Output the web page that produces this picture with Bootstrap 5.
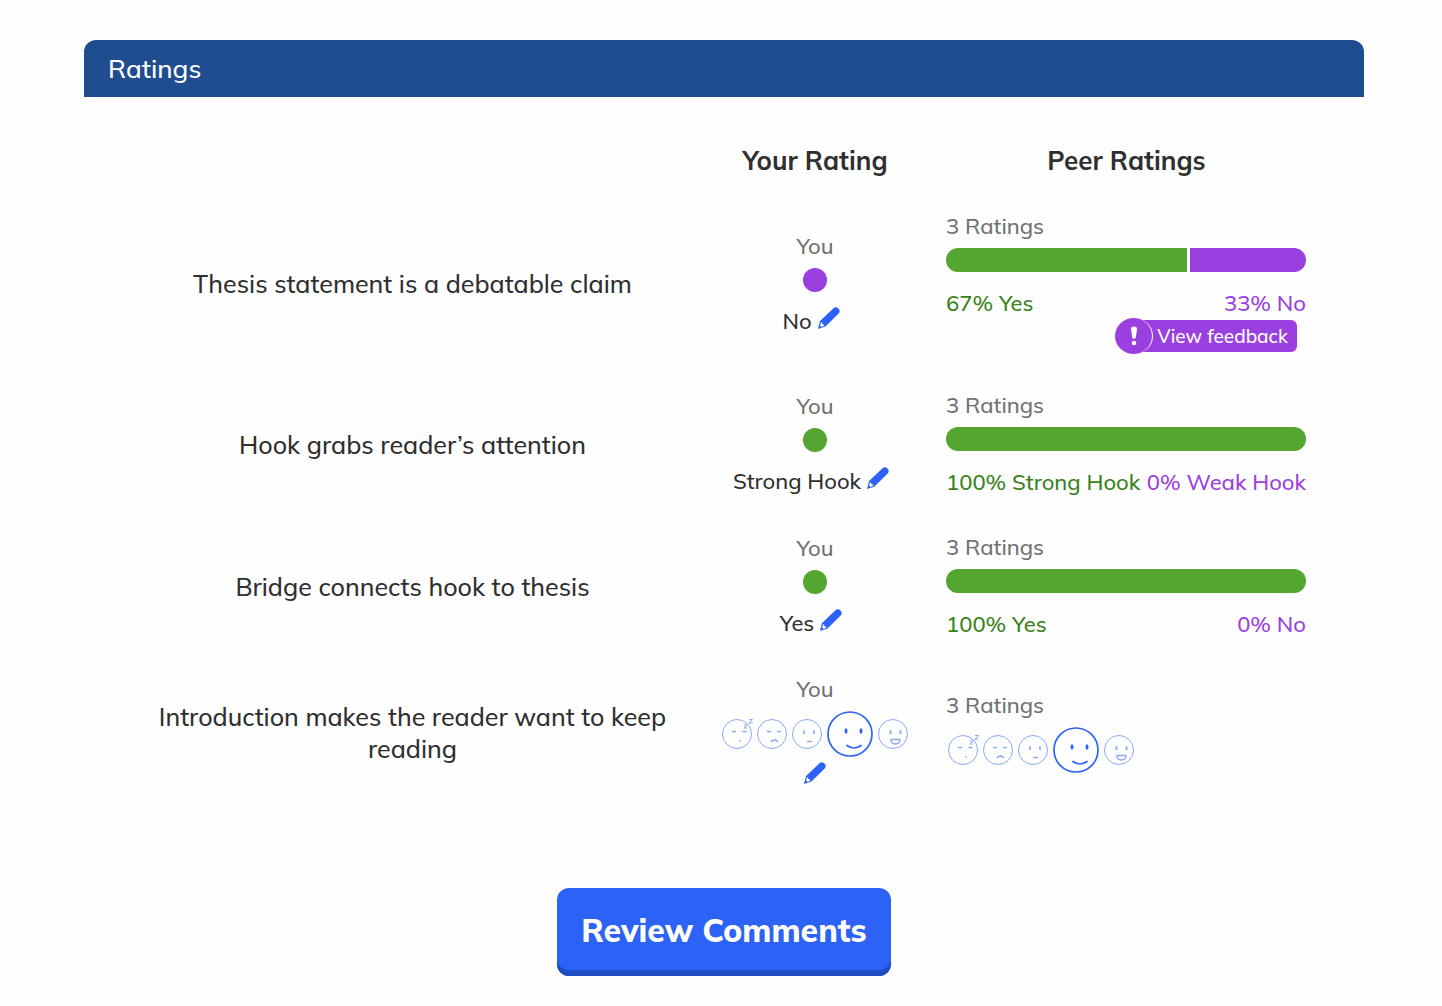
<!DOCTYPE html>
<html lang="en">
<head>
<meta charset="utf-8">
<meta name="viewport" content="width=device-width, initial-scale=1">
<title>Ratings</title>
<link href="https://cdn.jsdelivr.net/npm/bootstrap@5.3.0/dist/css/bootstrap.min.css" rel="stylesheet">
<style>
  body { font-family: Mulish, Muli, Lato, "Open Sans", sans-serif; color: #2f2f2f; background: #fefefe; }
  .page { padding: 40px 78px 28px 84px; }
  .panel-title { background: #204d8f; border-radius: 12px 12px 0 0; padding: 13px 24px 12px; font-size: 26px; line-height: 32px; font-weight: 500; }
  .table-wrap { padding: 30px 40px 80px; }
  .ratings { width: 100%; table-layout: fixed; }
  .ratings td { padding: 16px 18px 17px 17px; vertical-align: middle; }
  .ratings thead th { padding: 18px 0 17px; font-size: 26px; line-height: 32px; font-weight: 700; text-align: center; }
  .ratings tbody th { padding: 17px 24px 16px; font-size: 25px; line-height: 32px; font-weight: 500; text-align: center; }
  .ratings .col-you { width: 228px; }
  .ratings .col-peer { width: 395px; }
  .ratings td.you-cell { padding: 16px 0 17px; text-align: center; }
  .line { font-size: 22px; line-height: 32px; font-weight: 500; white-space: nowrap; }
  .muted { color: #717171; margin-bottom: 6px; }
  .dot { width: 24px; height: 24px; border-radius: 50%; margin: 0 auto 13px; }
  .bg-yes { background: #55a630; }
  .bg-no { background: #9b40e0; }
  .text-yes { color: #37821a; }
  .text-no { color: #9b40e0; }
  .bar { height: 24px; border-radius: 12px; gap: 3px; margin-bottom: 15px; background: transparent; }
  .own { gap: 5px; padding-right: 7px; }
  .edit { border: 0; background: none; padding: 0 0 6px; line-height: 0; color: #2c62f6; }
  .edit svg { width: 24px; height: 24px; }
  .faces { gap: 5px; height: 46px; margin-bottom: 4px; color: #2c62f6; }
  .peer-faces { padding-left: 2px; margin-bottom: 2px; }
  .faces svg { width: 30px; height: 30px; opacity: .55; overflow: visible; fill: none; stroke: currentColor; }
  .faces svg.chosen { width: 46px; height: 46px; opacity: 1; }
  .feedback { border: 0; background: none; padding: 0; margin: -1px 9px 2px 0; color: #fff; font-size: 19px; line-height: 32px; font-weight: 500; }
  .feedback-mark { width: 38px; height: 36px; border-radius: 50%; border-right: 1px solid #fff; z-index: 1; }
  .feedback-text { height: 32px; border-radius: 0 6px 6px 0; padding: 0 9px 0 14px; margin-left: -10px; }
  .review { border: 0; border-radius: 12px; background: #2c62f6; color: #fff; box-shadow: inset 0 -6px 0 #1f4cc4; padding: 22px 24px 26px; font-size: 32px; line-height: 40px; font-weight: 800; }
</style>
</head>
<body>
<svg width="0" height="0" class="d-none" aria-hidden="true">
  <symbol id="pencil" viewBox="0 0 24 24">
    <path fill="currentColor" d="M1 23l2-8L16.500 2.200a3.200 3.200 0 0 1 2.200-.9c2 0 4 2 4 4 0 .8-.3 1.500-.8 2L8.500 20.500z"/>
    <path fill="#fefefe" d="M4.200 15.800l1.300 2.200 2.200 1.300-3 1.800-1.600-1.600z"/>
  </symbol>
  <symbol id="face-sleepy" viewBox="0 0 30 30" overflow="visible">
    <circle cx="15" cy="15" r="14.500"/>
    <path d="M10 12q2 1.500 4 0M20.500 12q2 1.500 4 0M18 21v1.500" stroke-width="1.300"/>
    <path d="M22 6h3l-3 3h3M27 .5h3.500l-3.500 3.500h3.500"/>
  </symbol>
  <symbol id="face-sad" viewBox="0 0 30 30" overflow="visible">
    <circle cx="15" cy="15" r="14.500"/>
    <path d="M10 12q2 1.500 4 0M20 12q2 1.500 4 0M14 23q3.500-4 7 0" stroke-width="1.300"/>
  </symbol>
  <symbol id="face-flat" viewBox="0 0 30 30" overflow="visible">
    <circle cx="15" cy="15" r="14.500"/>
    <path d="M12 11.500v3.500M22 11.500v3.500" stroke-width="1.700"/><path d="M15 22.500h5" stroke-width="1.300"/>
  </symbol>
  <symbol id="face-happy" viewBox="0 0 46 46" overflow="visible">
    <circle cx="23" cy="23" r="22" stroke-width="1.700"/>
    <ellipse cx="19" cy="20" rx="1.500" ry="2.700" fill="currentColor" stroke="none"/>
    <ellipse cx="34" cy="20" rx="1.500" ry="2.700" fill="currentColor" stroke="none"/>
    <path d="M20 34.500q7 5 14 0" stroke-width="1.700" stroke-linecap="round"/>
  </symbol>
  <symbol id="face-grin" viewBox="0 0 30 30" overflow="visible">
    <circle cx="15" cy="15" r="14.500"/>
    <path d="M12.500 11.500v3.500M22.500 11.500v3.500" stroke-width="2"/>
    <path d="M13 20.500h9q0 4.500-4.500 4.500t-4.500-4.500z" stroke-width="1.300"/>
  </symbol>
</svg>
<main class="page">
  <h1 class="panel-title text-white m-0">Ratings</h1>
  <div class="table-wrap">
    <table class="ratings">
      <colgroup><col><col class="col-you"><col class="col-peer"></colgroup>
      <thead>
        <tr><td></td><th scope="col">Your Rating</th><th scope="col">Peer Ratings</th></tr>
      </thead>
      <tbody>
        <tr>
          <th scope="row">Thesis statement is a debatable claim</th>
          <td class="you-cell">
            <div class="line muted">You</div>
            <div class="dot bg-no"></div>
            <div class="line own d-flex align-items-center justify-content-center">No <button class="edit" type="button" aria-label="Edit rating"><svg><use href="#pencil"/></svg></button></div>
          </td>
          <td>
            <div class="line muted">3 Ratings</div>
            <div class="bar d-flex overflow-hidden"><div class="bg-yes" style="width:67%"></div><div class="bg-no flex-fill"></div></div>
            <div class="line d-flex justify-content-between"><span class="text-yes">67% Yes</span><span class="text-no">33% No</span></div>
            <div class="d-flex justify-content-end">
              <button class="feedback d-flex align-items-center" type="button">
                <span class="feedback-mark bg-no d-flex align-items-center justify-content-center position-relative">
                  <svg width="8" height="20" viewBox="0 0 8 20" fill="#fff" aria-hidden="true"><path d="M1 3q0-2.500 3-2.500t3 2.500l-1.300 9q-1.700 1.500-3.400 0z"/><circle cx="4" cy="17" r="2.300"/></svg>
                </span>
                <span class="feedback-text bg-no">View feedback</span>
              </button>
            </div>
          </td>
        </tr>
        <tr>
          <th scope="row">Hook grabs reader’s attention</th>
          <td class="you-cell">
            <div class="line muted">You</div>
            <div class="dot bg-yes"></div>
            <div class="line own d-flex align-items-center justify-content-center">Strong Hook <button class="edit" type="button" aria-label="Edit rating"><svg><use href="#pencil"/></svg></button></div>
          </td>
          <td>
            <div class="line muted">3 Ratings</div>
            <div class="bar d-flex overflow-hidden"><div class="bg-yes" style="width:100%"></div></div>
            <div class="line d-flex justify-content-between"><span class="text-yes">100% Strong Hook</span><span class="text-no">0% Weak Hook</span></div>
          </td>
        </tr>
        <tr>
          <th scope="row">Bridge connects hook to thesis</th>
          <td class="you-cell">
            <div class="line muted">You</div>
            <div class="dot bg-yes"></div>
            <div class="line own d-flex align-items-center justify-content-center">Yes <button class="edit" type="button" aria-label="Edit rating"><svg><use href="#pencil"/></svg></button></div>
          </td>
          <td>
            <div class="line muted">3 Ratings</div>
            <div class="bar d-flex overflow-hidden"><div class="bg-yes" style="width:100%"></div></div>
            <div class="line d-flex justify-content-between"><span class="text-yes">100% Yes</span><span class="text-no">0% No</span></div>
          </td>
        </tr>
        <tr>
          <th scope="row">Introduction makes the reader want to keep reading</th>
          <td class="you-cell">
            <div class="line muted">You</div>
            <div class="faces d-flex align-items-center justify-content-center">
              <svg><use href="#face-sleepy"/></svg><svg><use href="#face-sad"/></svg><svg><use href="#face-flat"/></svg><svg class="chosen"><use href="#face-happy"/></svg><svg><use href="#face-grin"/></svg>
            </div>
            <div class="line d-flex align-items-center justify-content-center"><button class="edit" type="button" aria-label="Edit rating"><svg><use href="#pencil"/></svg></button></div>
          </td>
          <td>
            <div class="line muted">3 Ratings</div>
            <div class="faces peer-faces d-flex align-items-center">
              <svg><use href="#face-sleepy"/></svg><svg><use href="#face-sad"/></svg><svg><use href="#face-flat"/></svg><svg class="chosen"><use href="#face-happy"/></svg><svg><use href="#face-grin"/></svg>
            </div>
          </td>
        </tr>
      </tbody>
    </table>
  </div>
  <div class="text-center"><button class="review" type="button">Review Comments</button></div>
</main>
<script src="https://cdn.jsdelivr.net/npm/bootstrap@5.3.0/dist/js/bootstrap.bundle.min.js"></script>
</body>
</html>
